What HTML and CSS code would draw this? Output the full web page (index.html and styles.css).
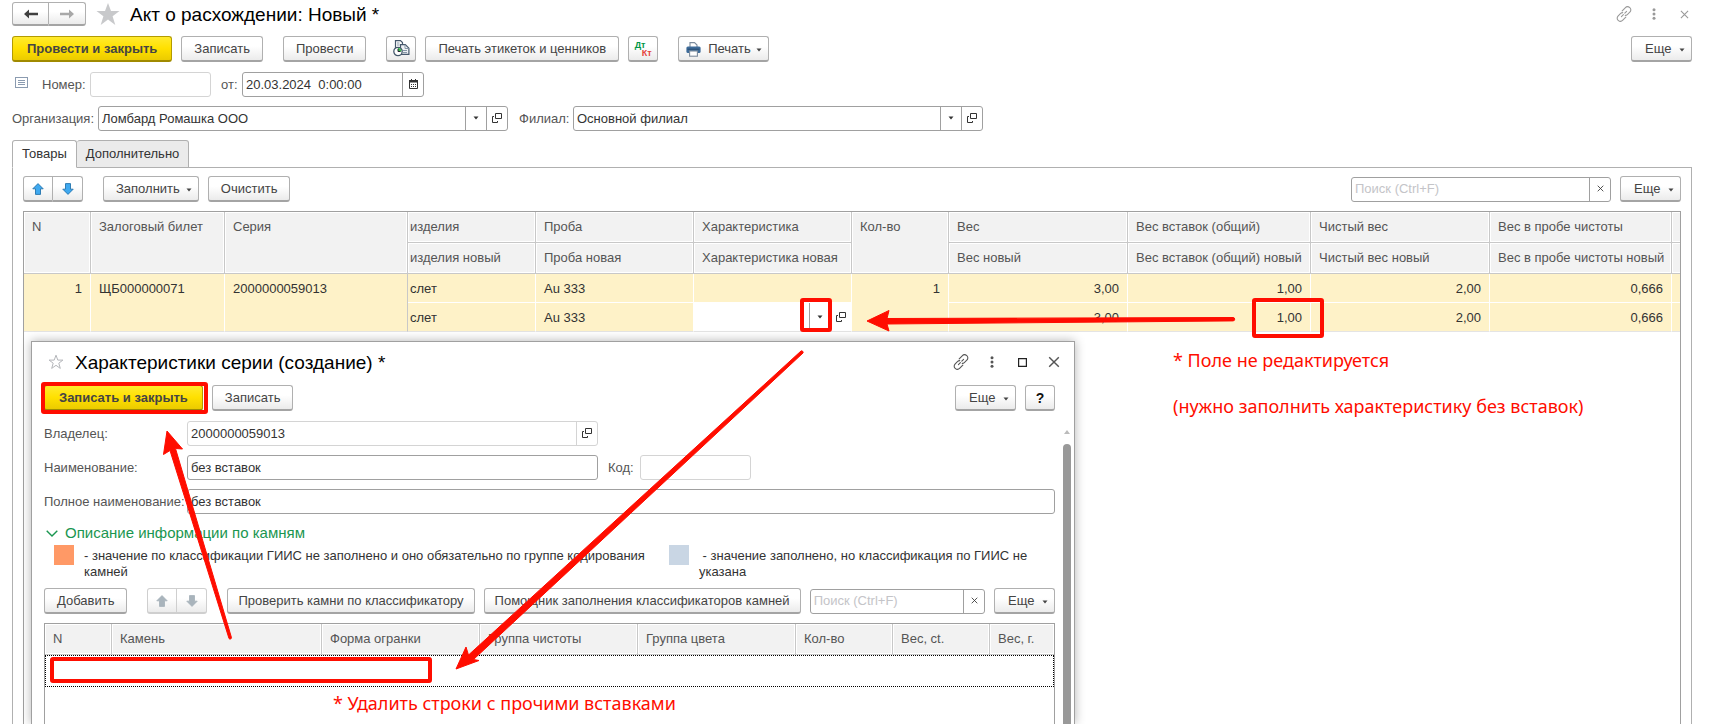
FILE: index.html
```html
<!DOCTYPE html>
<html lang="ru">
<head>
<meta charset="utf-8">
<title>Акт о расхождении: Новый *</title>
<link rel="stylesheet" href="styles.css">
</head>
<body>
<svg class="defs" aria-hidden="true">
  <symbol id="i-link" viewBox="0 0 16 16"><g fill="none" stroke="currentColor" stroke-width="1.1" stroke-linecap="round"><path d="M6.200 4.800l3-3c1.300-1.300 3.200-1.300 4.600-.1s1.300 3.200 0 4.500l-2.500 2.400c-.6.600-1.300.8-2 .8"/><path d="M9.800 11.200l-3 3c-1.300 1.300-3.200 1.300-4.600.1s-1.300-3.200 0-4.500l2.500-2.400c.6-.6 1.300-.8 2-.8"/><path d="M5.400 10.600l2-2M8.800 7.200l1.800-1.800"/></g></symbol>
  <symbol id="i-dots" viewBox="0 0 4 12"><g fill="currentColor"><circle cx="2" cy="1.700" r="1.500"/><circle cx="2" cy="6" r="1.500"/><circle cx="2" cy="10.300" r="1.500"/></g></symbol>
  <symbol id="i-close" viewBox="0 0 10 10"><path d="M1 1l8 8M9 1l-8 8" stroke="currentColor" stroke-width="1.200"/></symbol>
  <symbol id="i-open" viewBox="0 0 10 10"><path d="M3.500.5h6v5h-6zM2 3.500H.5v6h5V8" fill="none" stroke="currentColor"/></symbol>
  <symbol id="i-caret" viewBox="0 0 6 4"><path d="M.5.500h5L3 3.500z" fill="currentColor"/></symbol>
  <symbol id="i-up" viewBox="0 0 12 12"><path d="M6 .6l5.200 5.200H8.500v5.600h-5V5.800H.8z" fill="currentColor" stroke="var(--edge)" stroke-width=".9"/></symbol>
  <symbol id="i-down" viewBox="0 0 12 12"><path d="M6 11.400l5.200-5.200H8.500V.6h-5v5.600H.8z" fill="currentColor" stroke="var(--edge)" stroke-width=".9"/></symbol>
</svg>

<main class="form">
  <header class="titlebar">
    <div class="pair">
      <button class="btn" aria-label="Назад"><svg width="14" height="10" viewBox="0 0 14 10"><path d="M0 5l5-4.500v3.300h9v2.400H5v3.300z" fill="#404040"/></svg></button>
      <button class="btn" aria-label="Вперед"><svg width="14" height="10" viewBox="0 0 14 10"><path d="M14 5L9 .5v3.300H0v2.400h9v3.300z" fill="#a8a8a8"/></svg></button>
    </div>
    <svg class="star" width="24" height="22" viewBox="0 0 24 22"><path d="M12 0l3 8h8.500l-6.900 5.200L19.300 22 12 16.600 4.700 22l2.700-8.800L.5 8H9z" fill="#c8c9cb"/></svg>
    <h1>Акт о расхождении: Новый *</h1>
    <div class="window-tools muted">
      <button class="tool" aria-label="Ссылка"><svg width="16" height="16"><use href="#i-link"/></svg></button>
      <button class="tool" aria-label="Меню"><svg width="4" height="12"><use href="#i-dots"/></svg></button>
      <button class="tool" aria-label="Закрыть"><svg width="9" height="9"><use href="#i-close"/></svg></button>
    </div>
  </header>

  <div class="bar commands">
    <button class="btn primary">Провести и закрыть</button>
    <button class="btn">Записать</button>
    <button class="btn gap">Провести</button>
    <button class="btn icon gap" aria-label="Структура подчиненности"><svg width="17" height="17" viewBox="0 0 17 17"><path d="M2.500.6h5l2 2v8h-7z" fill="#fff" stroke="#46586c" stroke-width="1.200"/><path d="M7.500 4.600h4.800l3.600 3.600v6.200H7.500z" fill="#eef1f4" stroke="#46586c" stroke-width="1.200"/><path d="M12 4.800v3.700h3.700M4 3h2.500M4 5h2.500M9.500 10.500h4.500M10 12.500h4" fill="none" stroke="#8797a8"/><circle cx="5" cy="11.500" r="4.200" fill="#fff" stroke="#46586c" stroke-width="1.300"/><path d="M5 11.500V8a3.500 3.500 0 0 1 3.400 3.500z" fill="#38c048"/><path d="M5 8.800v2.700h2.500" fill="none" stroke="#223" stroke-width="1"/></svg></button>
    <button class="btn">Печать этикеток и ценников</button>
    <button class="btn icon" aria-label="Дт Кт"><span class="dtkt"><b>Дт</b><b>Кт</b></span></button>
    <button class="btn print gap"><svg width="15" height="15" viewBox="0 0 15 15"><path d="M4 5V.6h4.500L11 3v2" fill="#fff" stroke="#7c8b9c" stroke-width="1.100"/><rect x=".4" y="4.600" width="14.200" height="6.400" rx="1.500" fill="#3d6b99"/><path d="M1.500 7.200h12" stroke="#274a70" stroke-width="1"/><rect x="3.600" y="9" width="7.800" height="5.200" fill="#fff" stroke="#7c8b9c" stroke-width="1.100"/></svg>Печать<svg class="caret" width="6" height="4"><use href="#i-caret"/></svg></button>
    <button class="btn more push">Еще<svg class="caret" width="6" height="4"><use href="#i-caret"/></svg></button>
  </div>

  <div class="bar fields">
    <svg class="note" width="13" height="11" viewBox="0 0 13 11"><rect x=".5" y=".5" width="12" height="10" fill="#fff" stroke="#8b9bb0"/><path d="M3 3.500h7M3 5.500h7M3 7.500h7" stroke="#8b9bb0"/></svg>
    <label class="number-label" for="num">Номер:</label>
    <div class="field pale number"><input id="num" type="text"></div>
    <label class="date-label" for="date">от:</label>
    <div class="field date"><input id="date" type="text" value="20.03.2024  0:00:00"><button aria-label="Календарь"><svg width="9" height="10" viewBox="0 0 9 10"><path d="M.5 1.500h8v8h-8z" fill="none" stroke="currentColor"/><path d="M0 1h9v2.500H0zM2 0h1v2H2zM6 0h1v2H6z" fill="currentColor"/><path d="M2 5.500h5M2 7.500h5" stroke="currentColor" stroke-dasharray="1 1"/></svg></button></div>
  </div>

  <div class="bar fields org-row">
    <label class="org-label" for="org">Организация:</label>
    <div class="field wide"><input id="org" type="text" value="Ломбард Ромашка ООО"><button aria-label="Выбрать"><svg width="6" height="4"><use href="#i-caret"/></svg></button><button aria-label="Открыть"><svg width="10" height="10"><use href="#i-open"/></svg></button></div>
    <label class="branch-label" for="branch">Филиал:</label>
    <div class="field wide"><input id="branch" type="text" value="Основной филиал"><button aria-label="Выбрать"><svg width="6" height="4"><use href="#i-caret"/></svg></button><button aria-label="Открыть"><svg width="10" height="10"><use href="#i-open"/></svg></button></div>
  </div>

  <nav class="tabs" role="tablist">
    <button class="tab active" role="tab" aria-selected="true">Товары</button>
    <button class="tab" role="tab" aria-selected="false">Дополнительно</button>
  </nav>

  <section class="panel">
    <div class="bar">
      <div class="pair arrows">
        <button class="btn" aria-label="Вверх"><svg width="12" height="12"><use href="#i-up"/></svg></button>
        <button class="btn" aria-label="Вниз"><svg width="12" height="12"><use href="#i-down"/></svg></button>
      </div>
      <button class="btn fill gap">Заполнить<svg class="caret" width="6" height="4"><use href="#i-caret"/></svg></button>
      <button class="btn">Очистить</button>
      <div class="field search push"><input type="text" placeholder="Поиск (Ctrl+F)" aria-label="Поиск"><button aria-label="Очистить поиск"><svg width="7" height="7"><use href="#i-close"/></svg></button></div>
      <button class="btn more">Еще<svg class="caret" width="6" height="4"><use href="#i-caret"/></svg></button>
    </div>

    <div class="grid-frame">
      <table class="grid goods">
        <colgroup><col class="c-n"><col class="c-ticket"><col class="c-series"><col class="c-item"><col class="c-probe"><col class="c-probe"><col class="c-qty"><col class="c-weight"><col class="c-series"><col class="c-weight"><col class="c-pure"><col class="c-tail"></colgroup>
        <thead>
          <tr><th rowspan="2">N</th><th rowspan="2">Залоговый билет</th><th rowspan="2">Серия</th><th class="cut">изделия</th><th>Проба</th><th>Характеристика</th><th rowspan="2">Кол-во</th><th>Вес</th><th>Вес вставок (общий)</th><th>Чистый вес</th><th>Вес в пробе чистоты</th><th></th></tr>
          <tr><th class="cut">изделия новый</th><th>Проба новая</th><th>Характеристика новая</th><th>Вес новый</th><th>Вес вставок (общий) новый</th><th>Чистый вес новый</th><th>Вес в пробе чистоты новый</th><th></th></tr>
        </thead>
        <tbody>
          <tr><td rowspan="2" class="num">1</td><td rowspan="2">ЩБ000000071</td><td rowspan="2" class="fixed-edge">2000000059013</td><td class="cut">слет</td><td>Au 333</td><td></td><td rowspan="2" class="num">1</td><td class="num">3,00</td><td class="num">1,00</td><td class="num">2,00</td><td class="num">0,666</td><td></td></tr>
          <tr><td class="cut">слет</td><td>Au 333</td><td class="editing"><div class="cell-edit"><input type="text" aria-label="Характеристика новая"><button aria-label="Выбрать"><svg width="6" height="4"><use href="#i-caret"/></svg></button><button aria-label="Открыть"><svg width="10" height="10"><use href="#i-open"/></svg></button></div></td><td class="num">3,00</td><td class="num">1,00</td><td class="num">2,00</td><td class="num">0,666</td><td></td></tr>
        </tbody>
      </table>
    </div>
  </section>
</main>

<section class="dialog" role="dialog" aria-label="Характеристики серии">
  <header class="titlebar">
    <svg class="star" width="16" height="16" viewBox="0 0 16 16"><path d="M8 1.200l1.800 4.900h5.100l-4.100 3.100 1.500 5.200L8 11.300l-4.300 3.100 1.500-5.200L1.100 6.100h5.100z" fill="#fff" stroke="#b4b6ba"/></svg>
    <h2>Характеристики серии (создание) *</h2>
    <div class="window-tools">
      <button class="tool" aria-label="Ссылка"><svg width="16" height="16"><use href="#i-link"/></svg></button>
      <button class="tool" aria-label="Меню"><svg width="4" height="12"><use href="#i-dots"/></svg></button>
      <button class="tool" aria-label="Развернуть"><svg width="9" height="9" viewBox="0 0 9 9"><path d="M.6.600h7.800v7.800H.6z" fill="none" stroke="#222" stroke-width="1.200"/></svg></button>
      <button class="tool" aria-label="Закрыть"><svg width="12" height="12"><use href="#i-close"/></svg></button>
    </div>
  </header>

  <div class="bar dialog-commands">
    <button class="btn primary">Записать и закрыть</button>
    <button class="btn">Записать</button>
    <button class="btn more push">Еще<svg class="caret" width="6" height="4"><use href="#i-caret"/></svg></button>
    <button class="btn icon help">?</button>
  </div>

  <div class="dialog-body">
    <div class="rows">
      <div class="bar fields">
        <label for="owner">Владелец:</label>
        <div class="field pale wide"><input id="owner" type="text" value="2000000059013"><button aria-label="Открыть"><svg width="10" height="10"><use href="#i-open"/></svg></button></div>
      </div>
      <div class="bar fields">
        <label for="name">Наименование:</label>
        <div class="field wide"><input id="name" type="text" value="без вставок"></div>
        <label class="code-label" for="code">Код:</label>
        <div class="field pale code"><input id="code" type="text"></div>
      </div>
      <div class="bar fields">
        <label for="full">Полное наименование:</label>
        <div class="field full"><input id="full" type="text" value="без вставок"></div>
      </div>

      <h3><svg width="12" height="7" viewBox="0 0 12 7"><path d="M.7.700L6 6 11.300.7" fill="none" stroke="currentColor" stroke-width="1.400"/></svg>Описание информации по камням</h3>

      <div class="legend">
        <span class="swatch orange"></span>
        <p class="wide-note">- значение по классификации ГИИС не заполнено и оно обязательно по группе кодирования камней</p>
        <span class="swatch blue"></span>
        <p>&nbsp;- значение заполнено, но классификация по ГИИС не указана</p>
      </div>

      <div class="bar">
        <button class="btn">Добавить</button>
        <div class="pair arrows disabled gap">
          <button class="btn" aria-label="Вверх" disabled><svg width="12" height="12"><use href="#i-up"/></svg></button>
          <button class="btn" aria-label="Вниз" disabled><svg width="12" height="12"><use href="#i-down"/></svg></button>
        </div>
        <button class="btn long gap">Проверить камни по классификатору</button>
        <button class="btn long">Помощник заполнения классификаторов камней</button>
        <div class="field search"><input type="text" placeholder="Поиск (Ctrl+F)" aria-label="Поиск"><button aria-label="Очистить поиск"><svg width="7" height="7"><use href="#i-close"/></svg></button></div>
        <button class="btn more">Еще<svg class="caret" width="6" height="4"><use href="#i-caret"/></svg></button>
      </div>

      <div class="grid-frame">
        <table class="grid stones">
          <colgroup><col class="s-n"><col class="s-stone"><col class="s-mid"><col class="s-mid"><col class="s-mid"><col class="s-qty"><col class="s-qty"><col class="s-last"></colgroup>
          <thead><tr><th>N</th><th>Камень</th><th>Форма огранки</th><th>Группа чистоты</th><th>Группа цвета</th><th>Кол-во</th><th>Вес, ct.</th><th>Вес, г.</th></tr></thead>
          <tbody><tr><td colspan="8"></td></tr></tbody>
        </table>
      </div>
    </div>
    <div class="scroll" aria-hidden="true"><i class="scroll-up"></i><i class="thumb"></i></div>
  </div>
</section>

<div class="marks">
  <svg width="1711" height="724" viewBox="0 0 1711 724" aria-hidden="true">
    <g fill="none" stroke="#ff0d00" stroke-width="4">
      <rect x="43" y="384" width="163" height="28" rx="1"/>
      <rect x="802" y="300" width="28" height="30" rx="1"/>
      <rect x="1254" y="300" width="68" height="36" rx="1"/>
      <rect x="52" y="659" width="378" height="22" rx="1"/>
    </g>
    <g fill="#ff0d00" stroke="#ff0d00" stroke-width="1" stroke-linejoin="round">
      <path d="M867 321L889 310.500 887 318.500 1233 317.500a1.700 1.700 0 0 1 0 3.400L887 324 889 331z"/>
      <path d="M456 669L466 647 468.500 655 801 351a1.500 1.500 0 0 1 2 2L473.500 659.500 479 660.500z"/>
      <path d="M167 431L163.500 454.500 170 450.500 229 638.500a1.400 1.400 0 0 0 2.500-.8L175.500 448.500 182.500 449z"/>
    </g>
  </svg>
  <p class="mark-field">* Поле не редактируется<br>(нужно заполнить характеристику без вставок)</p>
  <p class="mark-rows">* Удалить строки с прочими вставками</p>
</div>
</body>
</html>
```
FILE: styles.css
```css
* { box-sizing: border-box; }

body {
  margin: 0;
  min-height: 100vh;
  position: relative;
  overflow: hidden;
  background: #fff;
  color: #333;
  font: 13px/16px "Liberation Sans", Arial, sans-serif;
}

button, input { font: inherit; color: inherit; }
button { margin: 0; cursor: pointer; }
svg { display: block; flex: none; }
h1, h2, h3, p { margin: 0; font-weight: normal; }
.defs { position: absolute; width: 0; height: 0; }

.form {
  display: flex;
  flex-direction: column;
  height: 100vh;
  padding: 2px 19px 0 12px;
}

/* Title bars */
.titlebar { display: flex; align-items: center; height: 24px; }
.form > .titlebar { margin-bottom: 10px; }
h1, h2 { padding-top: 1px; color: #000; font-size: 19px; line-height: 24px; }
h1 { margin-left: 10px; }
h2 { margin-left: 11px; }
.form .star { margin-left: 10px; }
.window-tools { display: flex; align-items: center; margin-left: auto; color: #555; }
.window-tools.muted { color: #999; margin-right: -7px; }
.tool {
  display: flex;
  align-items: center;
  justify-content: center;
  width: 30px;
  height: 24px;
  padding: 0;
  border: 0;
  background: none;
}

/* Buttons */
.bar { display: flex; align-items: center; gap: 9px; }
.btn {
  display: flex;
  align-items: center;
  justify-content: center;
  height: 26px;
  padding: 1px 12px 0;
  border: 1px solid #b0b0b0;
  border-bottom: 2px solid #a4a4a4;
  border-radius: 3px;
  background: linear-gradient(#fff 40%, #ebebeb);
  color: #444;
  white-space: nowrap;
}
.btn.primary {
  padding: 1px 14px 0;
  border-color: #b39b00 #b39b00 #a08a00;
  background: linear-gradient(#ffea2e, #ffe000 50%, #ebcb00);
  font-weight: bold;
}
.btn.long { padding: 1px 10px 0; }
.btn.icon { width: 30px; padding: 0; }
.btn.gap, .pair.gap { margin-left: 11px; }
.btn.help { color: #111; font-weight: bold; font-size: 14px; }
.push { margin-left: auto; }
.btn.more { width: 61px; padding: 1px 6px 0 13px; }
.btn.print { width: 91px; padding: 1px 6px 0 7px; }
.btn.print svg:first-child { margin-right: 7px; }
.btn.fill { padding-right: 6px; }
.caret { margin: 1px 0 0 6px; }
.print .caret, .more .caret { margin-left: auto; }

.pair { display: flex; }
.pair .btn { width: 37px; height: 24px; padding: 0; }
.pair .btn:first-child { border-radius: 3px 0 0 3px; }
.pair .btn:last-child { border-left: 0; border-radius: 0 3px 3px 0; }
.pair.arrows .btn { width: 30px; height: 26px; color: #3fa9f0; --edge: #2474ad; }
.pair.arrows.disabled .btn { color: #a9b4bc; --edge: #a9b4bc; border-color: #cfcfcf; }

.dtkt {
  display: flex;
  flex-direction: column;
  width: 17px;
  color: #009646;
  font: bold 9px/8px "Liberation Sans", Arial, sans-serif;
  text-align: left;
}
.dtkt b:last-child { color: #e5423c; text-align: right; }

/* Fields */
.fields { gap: 0; color: #555; }
.commands { margin-bottom: 10px; }
.form > .fields { margin-bottom: 9px; }
.field {
  display: flex;
  height: 25px;
  border: 1px solid #a0a0a0;
  border-radius: 3px;
  background: #fff;
  color: #333;
}
.field input {
  flex: 1;
  min-width: 0;
  width: 100%;
  padding: 0 3px;
  border: 0;
  outline: 0;
  background: none;
  white-space: pre;
}
.field button {
  display: flex;
  align-items: center;
  justify-content: center;
  width: 21px;
  padding: 0 0 2px;
  border: 0;
  border-left: 1px solid #a0a0a0;
  background: none;
}
.field.pale, .field.pale button { border-color: #d4d4d4; }
::placeholder { color: #c4c4c8; opacity: 1; }
.field.wide { width: 410px; }
.field.number { width: 121px; }
.field.date { width: 182px; }
.field.search { width: 260px; }
.note { margin: 0 14px 4px 3px; }
.number-label { width: 48px; }
.date-label { width: 31px; padding-left: 10px; }
.org-label { width: 86px; }
.branch-label { width: 65px; padding-left: 11px; }

/* Tabs and panel */
.tabs { display: flex; position: relative; margin-bottom: -1px; }
.tab {
  height: 28px;
  padding: 0 9px;
  border: 1px solid #b0b0b0;
  border-radius: 3px 3px 0 0;
  background: #ebebeb;
}
.tab + .tab { border-left: 0; }
.tab.active { border-bottom-color: #fff; background: #fff; }
.panel {
  display: flex;
  flex: 1;
  flex-direction: column;
  gap: 9px;
  padding: 8px 10px 0;
  border: 1px solid #b0b0b0;
  border-bottom: 0;
}
.grid-frame {
  flex: 1;
  border: 1px solid #a0a0a0;
  border-bottom: 0;
  overflow: hidden;
}

/* Tables */
.grid { width: 100%; border-collapse: separate; border-spacing: 0; table-layout: fixed; }
.grid th, .grid td { overflow: hidden; padding: 7px 8px 0; text-align: left; vertical-align: top; font-weight: normal; white-space: nowrap; }
.grid th {
  height: 31px;
  border: solid #c8c8c8;
  border-width: 0 1px 1px 0;
  background: #f2f2f2;
  box-shadow: inset 0 0 0 1px #fff;
  color: #555;
}
.grid th:last-child { border-right: 0; }
.goods td { height: 29px; border: solid #fff; border-width: 0 1px 1px 0; background: #fef2c8; }
.goods tbody tr:last-child td, .goods td[rowspan] { border-bottom-color: #e4e4e4; }
.goods td:last-child { border-right: 0; }
.goods td.num { text-align: right; }
.goods td.fixed-edge { border-right-color: #c8c8c8; }
.grid .cut { padding-left: 2px; }
.goods td.editing { padding: 0; background: #fff; }
.cell-edit { display: flex; height: 28px; }
.cell-edit input { flex: 1; min-width: 0; border: 0; outline: 0; background: none; }
.cell-edit button {
  display: flex;
  align-items: center;
  justify-content: center;
  width: 21px;
  padding: 0;
  border: 0;
  background: none;
}
.cell-edit input + button { border-left: 1px solid #a0a0a0; }
.c-n { width: 67px; }
.c-ticket { width: 134px; }
.c-series { width: 183px; }
.c-item { width: 128px; }
.c-probe { width: 158px; }
.c-qty { width: 97px; }
.c-weight { width: 179px; }
.c-pure { width: 182px; }
.c-tail { width: 9px; }

/* Dialog window */
.dialog {
  position: absolute;
  top: 341px;
  bottom: 0;
  left: 31px;
  display: flex;
  flex-direction: column;
  width: 1044px;
  max-width: calc(100% - 40px);
  padding: 8px 3px 0 12px;
  border: 1px solid #a0a0a0;
  border-bottom: 0;
  background: #fff;
  box-shadow: 0 0 10px rgba(0, 0, 0, .3);
}
.dialog .titlebar { padding-left: 4px; margin-bottom: 11px; }
.dialog .window-tools { margin-right: 2px; }
.dialog .tool { width: 31px; }
.dialog-commands { margin: 0 16px 10px 0; }
.dialog-body { display: flex; flex: 1; gap: 8px; min-height: 0; }
.rows { display: flex; flex: 1; flex-direction: column; gap: 9px; min-width: 0; }
.dialog label { width: 143px; white-space: nowrap; }
.dialog .code-label { width: 42px; padding-left: 10px; }
.dialog .field.wide { width: 411px; }
.dialog .field.code { width: 111px; }
.dialog .field.full { flex: 1; }
.dialog .field.search { flex: 1; width: auto; }
h3 {
  display: flex;
  align-items: center;
  gap: 7px;
  padding: 1px 0 0 2px;
  color: #1a9650;
  font-size: 15px;
  line-height: 18px;
}
.legend { display: flex; color: #333; margin: -6px 0 -4px; padding-left: 10px; }
.legend p { width: 300px; padding: 3px 0; margin-left: 10px; flex: 1; }
.legend .wide-note { flex: none; width: 570px; margin-right: 15px; }
.swatch { flex: none; width: 20px; height: 20px; }
.orange { background: #ff9966; }
.blue { background: #c9d6e4; }
.stones td { height: 32px; border: 1px dotted #000; }
.s-n { width: 67px; }
.s-stone { width: 210px; }
.s-mid { width: 158px; }
.s-qty { width: 97px; }
.s-last { width: 64px; }

.scroll { display: flex; flex-direction: column; align-items: center; width: 8px; }
.scroll-up { margin: 9px 0 10px; border: solid transparent; border-width: 0 3px 4px; border-bottom-color: #bbb; }
.thumb { flex: 1; width: 8px; border-radius: 4px 4px 0 0; background: #999; }

/* Callouts drawn over the windows */
.marks {
  position: absolute;
  inset: 0;
  pointer-events: none;
  color: #ff0d00;
  font: 18px/46px "Noto Sans", sans-serif;
}
.marks svg { position: absolute; top: 0; left: 0; }
.marks p { position: absolute; white-space: nowrap; }
.mark-field { top: 337px; left: 1173px; }
.mark-rows { top: 680px; left: 333px; }
```
